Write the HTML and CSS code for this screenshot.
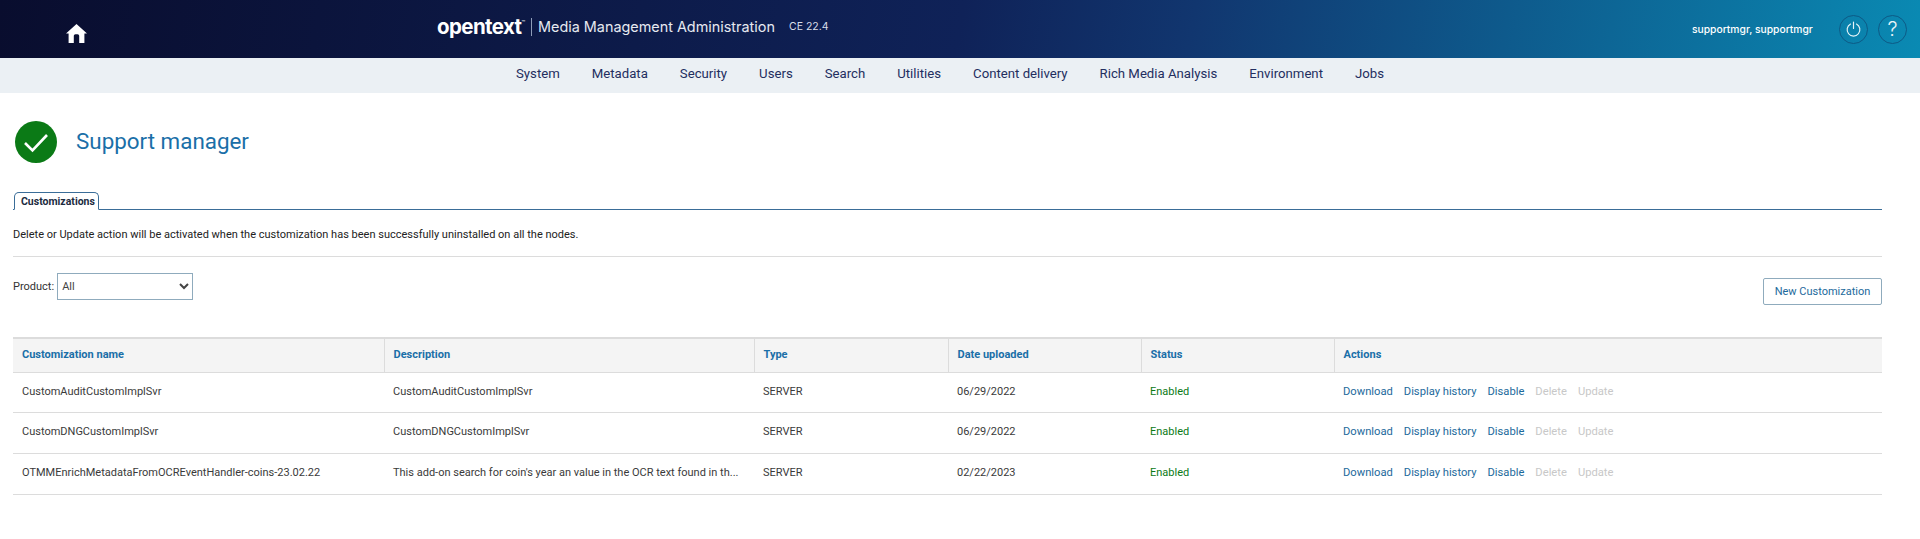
FILE: index.html
```html
<!DOCTYPE html>
<html lang="en">
<head>
<meta charset="utf-8">
<title>Media Management Administration</title>
<link rel="stylesheet" href="styles.css">
</head>
<body>
<header class="topbar">
  <a class="home" href="#" aria-label="Home">
    <svg viewBox="0 0 21 19" width="21" height="19"><path fill="#fff" d="M10.5 0 21 9.6h-2.6V19h-5.2v-7.2a1.6 1.6 0 0 0-1.6-1.6H9.4a1.6 1.6 0 0 0-1.6 1.6V19H2.6V9.6H0z"/></svg>
  </a>
  <div class="brand">
    <span class="logo">opentext<sup class="tm">™</sup></span>
    <span class="brand-sep"></span>
    <span class="app-name">Media Management Administration</span>
    <span class="version">CE 22.4</span>
  </div>
  <div class="user">
    <span class="user-name">supportmgr, supportmgr</span>
    <button class="round-btn" aria-label="Log out">
      <svg viewBox="0 0 16 16" width="17" height="17" fill="none" stroke="#e8f4f8" stroke-width="1.1" stroke-linecap="round"><path d="M5.2 2.9a6 6 0 1 0 5.6 0"/><path d="M8 1v6"/></svg>
    </button>
    <button class="round-btn round-help" aria-label="Help">?</button>
  </div>
</header>
<nav class="menu">
  <a href="#">System</a><a href="#">Metadata</a><a href="#">Security</a><a href="#">Users</a><a href="#">Search</a><a href="#">Utilities</a><a href="#">Content delivery</a><a href="#">Rich Media Analysis</a><a href="#">Environment</a><a href="#">Jobs</a>
</nav>
<main class="page">
  <div class="title-row">
    <span class="status-icon">
      <svg viewBox="0 0 42 42" width="42" height="42"><circle cx="21" cy="21" r="21" fill="#0b7a16"/><path d="M10 22l7.500 7.500L32 14" fill="none" stroke="#fff" stroke-width="2.600"/></svg>
    </span>
    <h1 class="title">Support manager</h1>
  </div>
  <div class="tabs"><span class="tab">Customizations</span></div>
  <p class="note">Delete or Update action will be activated when the customization has been successfully uninstalled on all the nodes.</p>
  <div class="toolbar">
    <label class="filter">Product:
      <select class="select"><option>All</option></select>
    </label>
    <button class="new-btn">New Customization</button>
  </div>
  <table class="grid">
    <colgroup>
      <col class="c-name"><col class="c-desc"><col class="c-type"><col class="c-date"><col class="c-status"><col>
    </colgroup>
    <thead>
      <tr><th>Customization name</th><th>Description</th><th>Type</th><th>Date uploaded</th><th>Status</th><th>Actions</th></tr>
    </thead>
    <tbody>
      <tr>
        <td>CustomAuditCustomImplSvr</td><td>CustomAuditCustomImplSvr</td><td>SERVER</td><td>06/29/2022</td><td class="ok">Enabled</td>
        <td><div class="actions"><a href="#">Download</a><a href="#">Display history</a><a href="#">Disable</a><span>Delete</span><span>Update</span></div></td>
      </tr>
      <tr>
        <td>CustomDNGCustomImplSvr</td><td>CustomDNGCustomImplSvr</td><td>SERVER</td><td>06/29/2022</td><td class="ok">Enabled</td>
        <td><div class="actions"><a href="#">Download</a><a href="#">Display history</a><a href="#">Disable</a><span>Delete</span><span>Update</span></div></td>
      </tr>
      <tr>
        <td>OTMMEnrichMetadataFromOCREventHandler-coins-23.02.22</td><td>This add-on search for coin's year an value in the OCR text found in th...</td><td>SERVER</td><td>02/22/2023</td><td class="ok">Enabled</td>
        <td><div class="actions"><a href="#">Download</a><a href="#">Display history</a><a href="#">Disable</a><span>Delete</span><span>Update</span></div></td>
      </tr>
    </tbody>
  </table>
</main>
</body>
</html>
```
FILE: styles.css
```css
* { box-sizing: border-box; }
html, body { margin: 0; padding: 0; }
body { background: #fff; color: #333; font-family: Roboto, "Liberation Sans", sans-serif; font-size: 11px; overflow: hidden; }
a { text-decoration: none; color: inherit; }

.topbar { height: 58px; display: flex; align-items: center; color: #fff; font-family: Inter, Roboto, sans-serif; background: linear-gradient(100deg, #090d2e 0%, #0f2258 50%, #11366f 62%, #0a8ab3 100%); }
.home { margin-left: 66px; margin-top: 8px; display: flex; }
.brand { margin-left: 350px; display: flex; align-items: center; height: 18px; margin-top: -5px; }
.logo { font-size: 20.5px; font-weight: 700; letter-spacing: -0.6px; line-height: 18px; width: 94px; white-space: nowrap; }
.tm { font-size: 6px; font-weight: 400; vertical-align: 9px; line-height: 0; letter-spacing: 0; }
.brand-sep { width: 1px; height: 18px; background: #8f9db8; margin-right: 6px; }
.app-name { font-size: 14.4px; width: 251px; color: #e6e9f0; white-space: nowrap; }
.version { font-size: 10.5px; color: #d9deea; white-space: nowrap; }
.user { margin-left: auto; margin-right: 13px; display: flex; align-items: center; }
.user-name { font-size: 10.3px; font-weight: 500; width: 147px; white-space: nowrap; }
.round-btn { width: 29px; height: 29px; padding: 0; border-radius: 50%; border: 1px solid #0d5a86; background: transparent; display: flex; align-items: center; justify-content: center; color: #e8f4f8; font-family: inherit; }
.round-help { margin-left: 10px; font-size: 20px; font-weight: 300; }

.menu { height: 35px; background: #ebf0f4; display: flex; justify-content: center; align-items: center; gap: 32px; font-size: 13.2px; color: #232e5f; padding: 0 20px 4px 0; }

.page { padding: 0 38px 0 13px; }
.title-row { display: flex; align-items: center; height: 44px; margin: 27px 0 0 2px; }
.status-icon { display: flex; }
.title { margin: 0 0 2px 19px; font-size: 22.4px; font-weight: 400; color: #1a6fa8; }

.tabs { margin-top: 28px; height: 18px; border-bottom: 1px solid #3a6d98; padding-left: 1px; }
.tab { display: inline-block; height: 18px; padding: 0 3px 0 6px; line-height: 17px; font-size: 10.5px; font-weight: 700; color: #1c2b3f; background: #fff; border: 1px solid #3a6d98; border-bottom: 1px solid #fff; border-radius: 5px 5px 0 0; }

.note { margin: 0; height: 47px; line-height: 50px; border-bottom: 1px solid #dcdcdc; color: #222; white-space: nowrap; }

.toolbar { display: flex; justify-content: space-between; align-items: flex-start; margin-top: 16px; height: 64px; }
.filter { display: flex; align-items: center; gap: 3px; color: #333; }
.select { width: 136px; height: 27px; border: 1px solid #8fabbd; background: #fff; color: #444; font: inherit; padding: 0; border-radius: 0; }
.new-btn { margin-top: 5px; width: 119px; height: 27px; padding: 0; border: 1px solid #8fabbd; border-radius: 2px; background: #fff; color: #1d6a9c; font: inherit; }

.grid { width: 100%; table-layout: fixed; border-collapse: collapse; border-top: 2px solid #dcdcdc; }
.c-name { width: 371px; }
.c-desc { width: 370px; }
.c-type { width: 194px; }
.c-date { width: 193px; }
.c-status { width: 193px; }
.grid th { height: 34px; background: #f4f4f4; color: #1a6fa8; font-weight: 700; text-align: left; padding: 0 9px 2px; border-left: 1px solid #dcdcdc; border-bottom: 1px solid #dcdcdc; }
.grid th:first-child { border-left: 0; }
.grid td { height: 41px; padding: 0 9px 2px; border-bottom: 1px solid #dcdcdc; white-space: nowrap; overflow: hidden; color: #3a3a3a; }
.grid tbody tr:first-child td { height: 40px; }
.grid .ok { color: #0b7a16; }
.actions { color: #c8c8c8; display: flex; align-items: center; gap: 11px; font-size: 11.2px; }
.actions a { color: #1d6a9c; }
```
